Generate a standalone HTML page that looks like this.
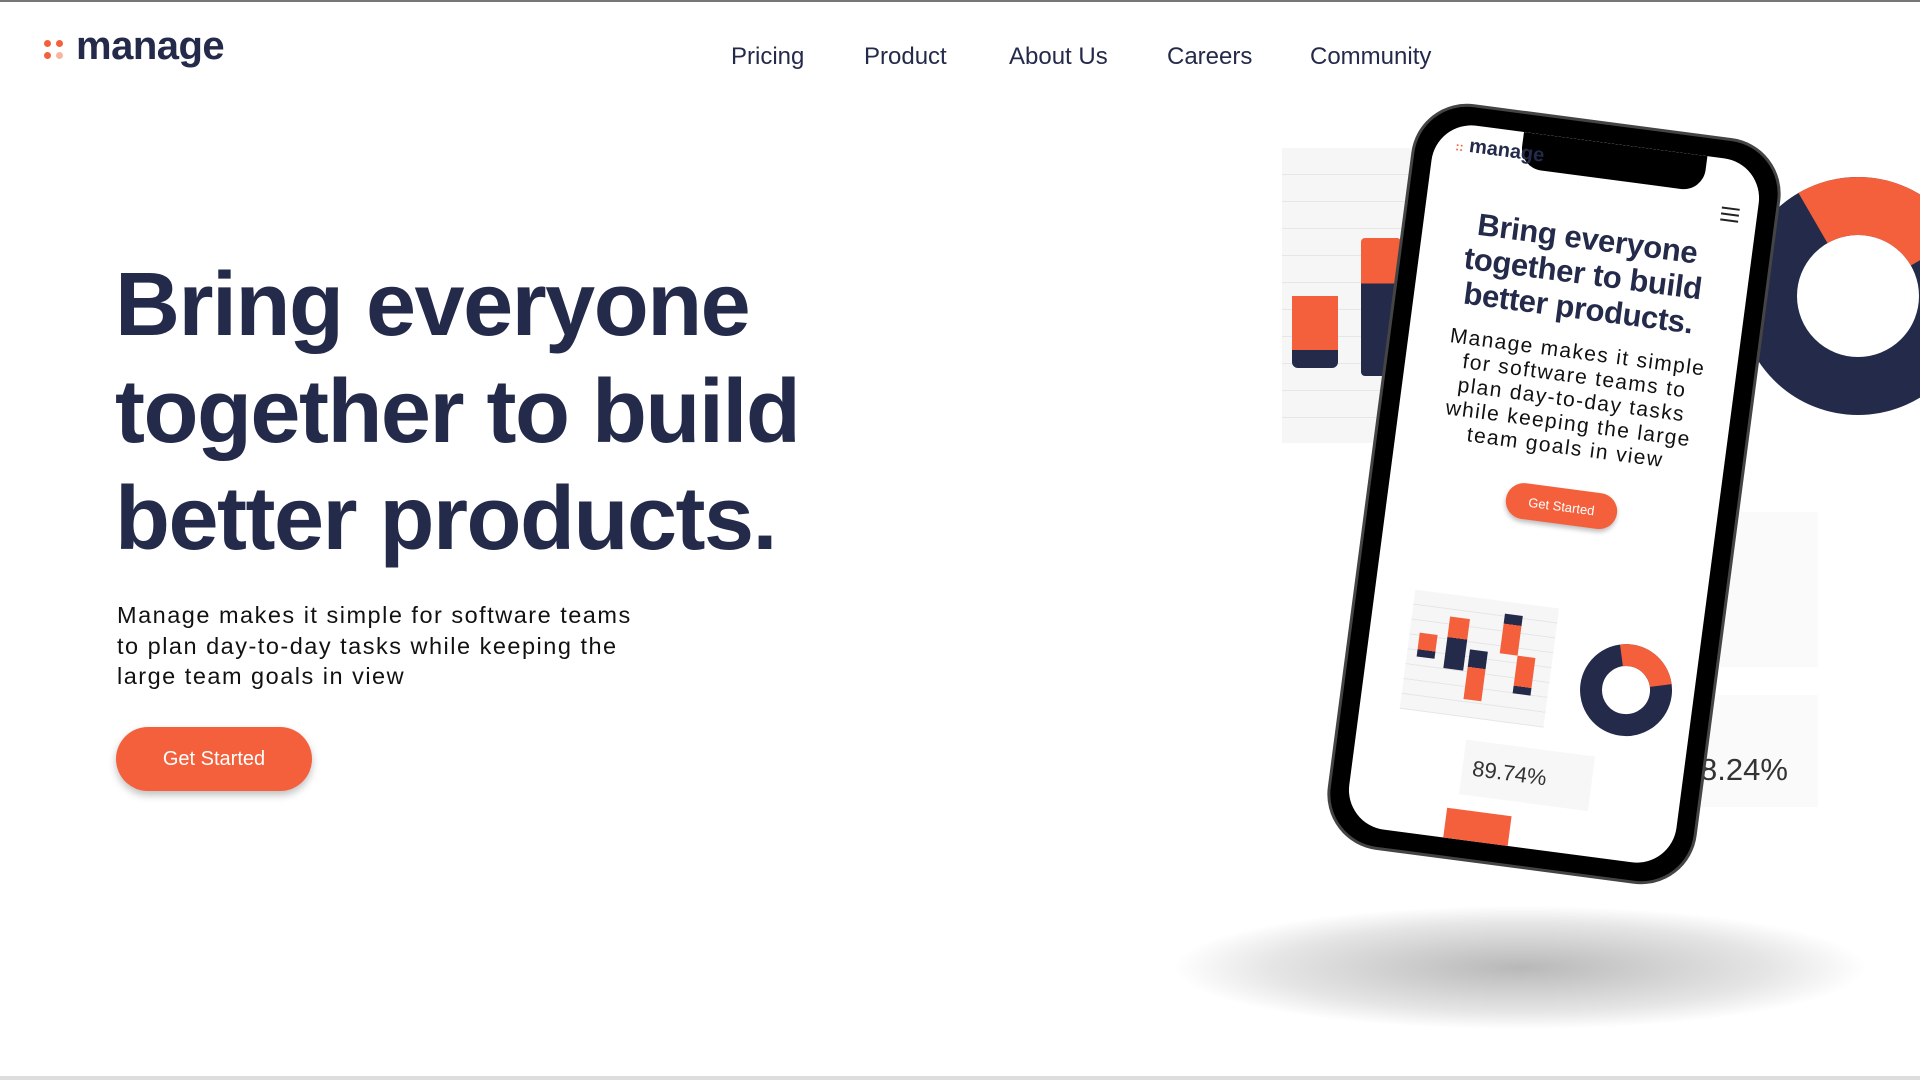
<!DOCTYPE html>
<html><head><meta charset="utf-8"><style>
*{margin:0;padding:0;box-sizing:border-box}
body{width:1920px;height:1080px;overflow:hidden;background:#fff;font-family:"Liberation Sans",sans-serif;position:relative}
.topline{position:absolute;left:0;top:0;width:1920px;height:2px;background:#777}
.botline{position:absolute;left:0;top:1076px;width:1920px;height:4px;background:#ddd}
.logo{position:absolute;left:44px;top:24px;display:flex;align-items:center}
.dots{display:grid;grid-template-columns:7px 7px;gap:5px;margin-right:13px;margin-top:6px}
.dots i{width:7px;height:7px;border-radius:50%;background:#f4603c;display:block}
.dots i.l{background:#f7b79f}
.logo span{font-size:40px;color:#242a4a;font-weight:600;letter-spacing:-0.5px}
.nav a{position:absolute;top:43px;font-size:24px;color:#242a4a;text-decoration:none}
h1{position:absolute;left:115px;top:252px;font-size:90px;line-height:107px;color:#242a4a;font-weight:bold;letter-spacing:-1.5px}
p.sub{position:absolute;left:117px;top:600px;font-size:23.5px;line-height:30.5px;color:#111;width:760px;letter-spacing:1.5px}
.btn{position:absolute;left:116px;top:727px;width:196px;height:64px;border-radius:32px;background:#f4603c;color:#fff;font-size:20px;display:flex;align-items:center;justify-content:center;box-shadow:0 4px 8px rgba(0,0,0,.25)}
.shadow{position:absolute;left:1170px;top:905px;width:700px;height:125px;border-radius:50%;background:radial-gradient(ellipse at center,rgba(0,0,0,.28),rgba(0,0,0,.1) 50%,rgba(0,0,0,0) 70%)}
.panel{position:absolute;background:#fafafa}
.phone{position:absolute;left:1368px;top:118px;width:372px;height:752px;border-radius:56px;background:#000;border:3px solid #444;transform:rotate(7.5deg);transform-origin:center}
.screen{position:absolute;left:18px;top:18px;right:18px;bottom:18px;border-radius:40px;background:#fff;overflow:hidden}
.notch{position:absolute;left:88px;top:0;width:185px;height:36px;background:#000;border-radius:0 0 22px 22px}
.ps h2{position:absolute;left:0;width:100%;top:80px;text-align:center;font-size:31px;line-height:35px;color:#242a4a;font-weight:bold;letter-spacing:-0.3px}
.ps p{position:absolute;left:0;width:340px;top:200px;text-align:center;font-size:21px;line-height:24px;color:#111;letter-spacing:1.4px}
.pbtn{position:absolute;left:118px;top:348px;width:112px;height:36px;border-radius:18px;background:#f4603c;color:#fff;font-size:13px;display:flex;align-items:center;justify-content:center;box-shadow:0 3px 5px rgba(0,0,0,.25)}
</style></head><body>
<div class="topline"></div>
<div class="logo"><div class="dots"><i></i><i></i><i></i><i class="l"></i></div><span>manage</span></div>
<div class="nav"><a style="left:731px">Pricing</a><a style="left:864px">Product</a><a style="left:1009px">About Us</a><a style="left:1167px">Careers</a><a style="left:1310px">Community</a></div>
<h1>Bring everyone<br>together to build<br>better products.</h1>
<p class="sub">Manage makes it simple for software teams<br>to plan day-to-day tasks while keeping the<br>large team goals in view</p>
<div class="btn">Get Started</div>

<div class="panel" style="left:1282px;top:148px;width:130px;height:295px;background:repeating-linear-gradient(#f6f6f6 0 26px,#e6e6e6 26px 27px)"></div>
<div style="position:absolute;left:1292px;top:296px;width:46px;height:72px;border-radius:0 0 6px 6px;background:linear-gradient(#f4603c 0 75%,#242a4a 75%)"></div>
<div style="position:absolute;left:1361px;top:238px;width:40px;height:138px;border-radius:4px;background:linear-gradient(#f4603c 0 33%,#242a4a 33%)"></div>
<svg style="position:absolute;left:1730px;top:170px" width="190" height="260"><circle cx="128" cy="126" r="90" fill="none" stroke="#242a4a" stroke-width="58"/><path d="M128 36 A90 90 0 0 1 218 126" fill="none" stroke="#f4603c" stroke-width="58" transform="rotate(-30 128 126)"/></svg>
<div class="panel" style="left:1720px;top:512px;width:98px;height:155px"></div>
<div class="panel" style="left:1690px;top:695px;width:128px;height:112px"></div>
<div style="position:absolute;left:1700px;top:752px;font-size:31px;color:#333">8.24%</div>
<div class="shadow"></div>

<div class="phone"><div class="screen ps">
<div class="notch"></div>
<div style="position:absolute;left:22px;top:10px;font-size:20px;color:#242a4a;font-weight:bold"><span style="color:#f4603c;font-size:12px">::</span> manage</div>
<div style="position:absolute;right:18px;top:48px;width:18px;height:14px;border-top:2px solid #222;border-bottom:2px solid #222"><div style="margin-top:4px;height:2px;background:#222"></div></div>
<h2>Bring everyone<br>together to build<br>better products.</h2>
<p>Manage makes it simple<br>for software teams to<br>plan day-to-day tasks<br>while keeping the large<br>team goals in view</p>
<div class="pbtn">Get Started</div>
<div style="position:absolute;left:40px;top:468px;width:145px;height:120px;background:repeating-linear-gradient(#f6f6f6 0 14px,#e6e6e6 14px 15px)"></div>
<div style="position:absolute;left:50px;top:510px;width:18px;height:24px;background:linear-gradient(#f4603c 70%,#242a4a 70%)"></div>
<div style="position:absolute;left:78px;top:490px;width:20px;height:52px;background:linear-gradient(#f4603c 40%,#242a4a 40%)"></div>
<div style="position:absolute;left:102px;top:520px;width:18px;height:50px;background:linear-gradient(#242a4a 35%,#f4603c 35%)"></div>
<div style="position:absolute;left:132px;top:480px;width:18px;height:40px;background:linear-gradient(#242a4a 25%,#f4603c 25%)"></div>
<div style="position:absolute;left:150px;top:520px;width:18px;height:38px;background:linear-gradient(#f4603c 80%,#242a4a 80%)"></div>
<svg style="position:absolute;left:210px;top:488px" width="110" height="110"><circle cx="52" cy="52" r="35" fill="none" stroke="#242a4a" stroke-width="22"/><path d="M52 17 A35 35 0 0 1 87 52" fill="none" stroke="#f4603c" stroke-width="22" transform="rotate(-15 52 52)"/></svg>
<div style="position:absolute;left:110px;top:610px;width:130px;height:55px;background:#f7f7f7"></div>
<div style="position:absolute;left:120px;top:625px;font-size:22px;color:#333">89.74%</div>
<div style="position:absolute;left:100px;top:680px;width:65px;height:40px;background:#f4603c"></div>
</div></div>
<div class="botline"></div>
</body></html>
